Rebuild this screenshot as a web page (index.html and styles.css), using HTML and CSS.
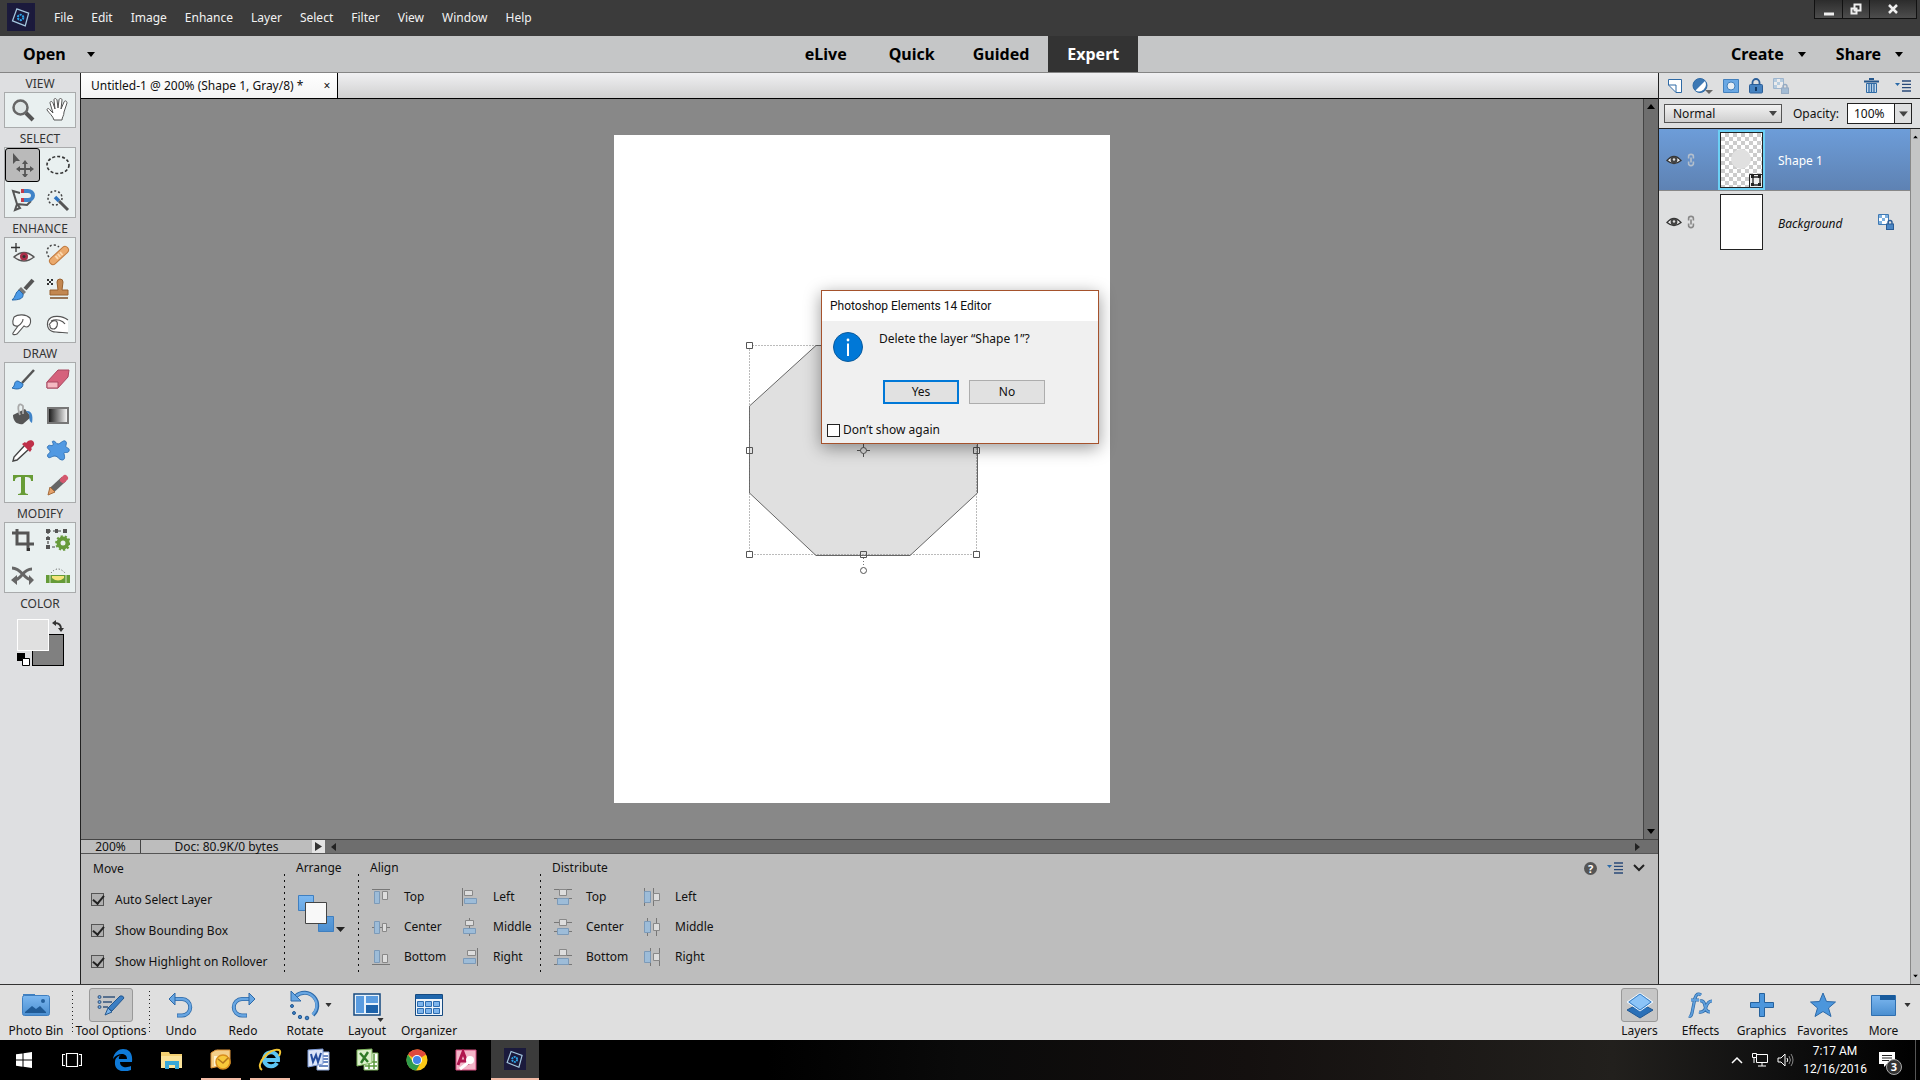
FILE: index.html
```html
<!DOCTYPE html>
<html lang="en">
<head>
  <meta charset="UTF-8">
  <meta name="viewport" content="width=device-width, initial-scale=1.0">
  <title>Photoshop Elements 14 Editor</title>
  <link rel="stylesheet" href="styles.css">
</head>
<body>
  <!-- shared shapes -->
  <svg class="defs" width="0" height="0" aria-hidden="true">
    <defs>
      <linearGradient id="blue" x1="0" y1="0" x2="0" y2="1"><stop offset="0" stop-color="#7db8f0"/><stop offset="1" stop-color="#4a8ed0"/></linearGradient>
      <linearGradient id="bw"><stop offset="0" stop-color="#111"/><stop offset="1" stop-color="#fff"/></linearGradient>
      <symbol id="down" viewBox="0 0 8 5"><path d="M0 0h8L4 5z"/></symbol>
      <symbol id="eye" viewBox="0 0 16 12"><path d="M1 6.500Q8-1.500 15 6.500Q8 12.500 1 6.500z" fill="#eee" stroke="#333" stroke-width="1.300"/><circle cx="8" cy="6" r="3.400" fill="#444"/><circle cx="8" cy="5.500" r="1.200" fill="#ddd"/></symbol>
      <symbol id="link" viewBox="0 0 10 16"><path d="M2 6V3.500a3 2.500 0 0 1 6 0V6M2 10v2.500a3 2.500 0 0 0 6 0V10M5 5v6" fill="none" stroke="currentColor" stroke-width="2"/></symbol>
      <symbol id="lines" viewBox="0 0 16 12"><path d="M0 3h5L2.500 6z" fill="#2a6aa8"/><path d="M7 1h9M7 4.300h9M7 7.600h9M7 11h9" stroke="#2a4a78" stroke-width="1.300"/></symbol>
      <symbol id="lockpix" viewBox="0 0 16 16"><path d="M.5.5h10v10H.5z" fill="#fff" stroke="#3f79b3"/><path d="M1 1h3v3H1zM7 1h3v3H7zM4 4h3v3H4zM1 7h3v3H1z" fill="#7db0df"/><path d="M10 10V8.500a2 2 0 0 1 4 0V10" fill="none" stroke="#2a5c96" stroke-width="1.400"/><rect x="8.500" y="10" width="7" height="5.500" fill="#4a86c4" stroke="#2a5c96"/></symbol>
      <symbol id="pse" viewBox="0 0 28 33"><rect width="28" height="33" fill="#1b1a3c"/><path d="M9 7l14 5-4 15-15-6z" fill="none" stroke="#a5c8e0" stroke-width="1.500"/><circle cx="13.500" cy="17" r="3.200" fill="none" stroke="#2ba3e8" stroke-width="2.400" stroke-dasharray="2.400 1"/></symbol>
    </defs>
  </svg>

  <header class="menu-bar">
    <svg class="logo" viewBox="0 0 28 33"><use href="#pse"/></svg>
    <nav class="menus">
      <button>File</button><button>Edit</button><button>Image</button><button>Enhance</button><button>Layer</button><button>Select</button><button>Filter</button><button>View</button><button>Window</button><button>Help</button>
    </nav>
    <div class="window-buttons">
      <button aria-label="Minimize"><svg width="12" height="14"><path d="M1 12h10" stroke="#eee" stroke-width="3"/></svg></button>
      <button aria-label="Restore"><svg width="14" height="14"><path d="M5.500 2.500h6v6h-6zM2.500 6.500h5v5h-5z" fill="#333" stroke="#eee" stroke-width="2"/></svg></button>
      <button aria-label="Close"><svg width="12" height="14"><path d="M2 3l8 8M10 3l-8 8" stroke="#eee" stroke-width="2.500"/></svg></button>
    </div>
  </header>

  <div class="mode-bar">
    <div class="mode-side"><button class="drop open">Open <svg width="8" height="5"><use href="#down"/></svg></button></div>
    <nav class="modes">
      <button class="wide">eLive</button><button>Quick</button><button>Guided</button><button class="active">Expert</button>
    </nav>
    <div class="mode-side right">
      <button class="drop">Create <svg width="8" height="5"><use href="#down"/></svg></button>
      <button class="drop">Share <svg width="8" height="5"><use href="#down"/></svg></button>
    </div>
  </div>

  <main class="workspace">
    <aside class="toolbox">
      <h2>VIEW</h2>
      <div class="tools">
        <button aria-label="Zoom"><svg viewBox="0 0 24 24"><circle cx="9.500" cy="9.500" r="7" fill="#dfe6e6" stroke="#666" stroke-width="2.500"/><path d="M15 15l7 7" stroke="#555" stroke-width="4"/></svg></button>
        <button aria-label="Hand"><svg viewBox="0 0 24 24"><path d="M8 22c-1-4-5-7-7-10 0-2 2-2 3 0l3 3L4 5c0-2 2-2 3 0l2 6L8 2c0-2 2-2 3 0l1 8 1-8c0-2 3-2 3 0l-1 9 3-7c1-2 3-1 3 1l-3 9c0 4-2 5-2 8z" fill="#fff" stroke="#555"/></svg></button>
      </div>
      <h2>SELECT</h2>
      <div class="tools">
        <button class="selected" aria-label="Move"><svg viewBox="0 0 24 24"><path d="M2 0v11l3-3h4z" fill="#555"/><path d="M14 9v14M7 16h14" stroke="#555" stroke-width="1.800"/><path d="M14 7l3 4h-6zM14 25l3-4h-6zM5 16l4-3v6zM23 16l-4-3v6z" fill="#555"/></svg></button>
        <button aria-label="Marquee"><svg viewBox="0 0 24 24"><ellipse cx="12" cy="12" rx="11" ry="8.500" fill="none" stroke="#333" stroke-width="1.600" stroke-dasharray="3 2"/></svg></button>
        <button aria-label="Lasso"><svg viewBox="0 0 24 24"><path d="M9 5L2 3l4 13 10 1 4-4M6 16l-2 6 5-2z" fill="none" stroke="#555" stroke-width="2"/><path d="M13 3h4a5 4.500 0 0 1 0 9h-4" fill="none" stroke="#3f83c8" stroke-width="4"/><path d="M10 3h3M10 12h3" stroke="#c23a4a" stroke-width="4"/></svg></button>
        <button aria-label="Quick selection"><svg viewBox="0 0 24 24"><circle cx="9" cy="10" r="7" fill="none" stroke="#444" stroke-width="1.500" stroke-dasharray="2 2"/><path d="M9 9l4 4" stroke="#2f74c0" stroke-width="3.500"/><path d="M13 13l9 9" stroke="#555" stroke-width="3"/></svg></button>
      </div>
      <h2>ENHANCE</h2>
      <div class="tools">
        <button aria-label="Red eye"><svg viewBox="0 0 24 24"><path d="M5 0v9M0 4.500h9" stroke="#333" stroke-width="1.300"/><path d="M3 14Q13 5 23 14Q13 22 3 14z" fill="#eee" stroke="#555" stroke-width="1.500"/><circle cx="13" cy="13.500" r="4" fill="#a82e48"/><circle cx="13" cy="13.500" r="1.500" fill="#333"/></svg></button>
        <button aria-label="Spot healing"><svg viewBox="0 0 24 24"><path d="M3 14a6 6 0 1 1 10-10" fill="none" stroke="#444" stroke-width="1.500" stroke-dasharray="2 2"/><path d="M7 18L19 7" stroke="#c07b40" stroke-width="8" stroke-linecap="round"/><path d="M7 18L19 7" stroke="#eaa96c" stroke-width="6" stroke-linecap="round"/><path d="M10 15l6-5" stroke="#fbd8ae" stroke-width="4" stroke-dasharray="2 1"/></svg></button>
        <button aria-label="Smart brush"><svg viewBox="0 0 24 24"><path d="M22 2l-8 9" stroke="#555" stroke-width="4"/><path d="M10 9l5 5-3 3-5-5z" fill="#777"/><path d="M8 12C4 14 5 19 1 22c6 0 12-1 11-6z" fill="#4a9ae8" stroke="#2a69a8"/></svg></button>
        <button aria-label="Clone stamp"><svg viewBox="0 0 24 24"><path d="M1 1h2v2H1zM5 1h2v2H5zM3 3h2v2H3zM1 5h2v2H1zM5 5h2v2H5z" fill="#333"/><path d="M11 4a3 3 0 0 1 6 0l-1 8h6v5H4v-5h8z" fill="#c38750" stroke="#98602e"/><path d="M4 20h18" stroke="#7c4e26" stroke-width="1.500"/></svg></button>
        <button aria-label="Smudge"><svg viewBox="0 0 24 24"><path d="M3 4c4-3 13-3 16 1 2 5 0 10-4 10l-3-1c-2 2-4 5-6 7-2 1-5 1-4-1l5-7c-4 2-6 0-5-3z" fill="#fff"/><path d="M3 4c-2 5-2 10 4 9l-5 7c-1 2 2 2 4 1l7-8c4 3 8-2 6-8M3 4c4-3 12-3 16 1M7 13c3-2 5-5 5-7" fill="none" stroke="#555" stroke-width="1.100"/></svg></button>
        <button aria-label="Sponge"><svg viewBox="0 0 24 24"><path d="M22 7C17 3 5 1 2 8c-2 7 2 11 8 11 6 1 7 0 12 1" fill="#fff" stroke="#555" stroke-width="1.200"/><path d="M5 8c6-3 12 0 14 3M3 12c4-7 10-5 8 1-2 5-8 3-7-1" fill="none" stroke="#555" stroke-width="1.200"/></svg></button>
      </div>
      <h2>DRAW</h2>
      <div class="tools">
        <button aria-label="Brush"><svg viewBox="0 0 24 24"><path d="M23 2L11 15" stroke="#555" stroke-width="2.500"/><path d="M7 13c-5 0-2 5-6 7 5 2 11 1 11-4z" fill="#4a9ae8" stroke="#2a69a8"/></svg></button>
        <button aria-label="Eraser"><svg viewBox="0 0 24 24"><path d="M12 2h11l-1 7-10 11H1v-6z" fill="#d5627c" stroke="#a84860"/><path d="M1 14h11v6H1z" fill="#f5b9c2" stroke="#a84860"/></svg></button>
        <button aria-label="Paint bucket"><svg viewBox="0 0 24 24"><path d="M2 12l12-6 6 8-8 7c-5 1-10-2-10-9z" fill="#555"/><path d="M9 12C5 2 9-1 12 3v8" fill="none" stroke="#aaa" stroke-width="1.800"/><path d="M15 8c7-1 7 7 6 12-4-2-2-7-3-9z" fill="#3f83c8"/></svg></button>
        <button aria-label="Gradient"><svg viewBox="0 0 24 24"><path d="M2 5h20v15H2z" fill="url(#bw)" stroke="#777" stroke-width="2"/></svg></button>
        <button aria-label="Eyedropper"><svg viewBox="0 0 24 24"><path d="M14 7l4 4L6 22l-4 1 1-4z" fill="#fff" stroke="#444" stroke-width="1.400"/><path d="M11 6l8 8 2-3-1-1 3-3c1-4-3-6-6-4l-2 2-1-1z" fill="#bf3049"/></svg></button>
        <button aria-label="Custom shape"><svg viewBox="0 0 24 24"><path d="M7 3c3 0 3 3 5 3s5-4 7-3c3 1 0 5 1 6s4 1 3 4-6 0-5 3 1 6-2 6-4-4-7-4-6 3-7 1c-2-3 3-4 2-6S0 10 2 8s4 1 5-1-2-3 0-4z" fill="#5199e2" stroke="#3575b8"/></svg></button>
        <button aria-label="Type"><svg viewBox="0 0 24 24"><path d="M2 2h20v6h-2c0-3-1-4-6-4v15c0 1 1 2 3 2v1H7v-1c2 0 3-1 3-2V4C5 4 4 5 4 8H2z" fill="#689c36"/></svg></button>
        <button aria-label="Pencil"><svg viewBox="0 0 24 24"><path d="M6 17L18 6" stroke="#666" stroke-width="6"/><path d="M17 7l2-2" stroke="#d4586e" stroke-width="6" stroke-linecap="round"/><path d="M4 14l5 5-7 3z" fill="#e5a26c" stroke="#a46a3a"/></svg></button>
      </div>
      <h2>MODIFY</h2>
      <div class="tools">
        <button aria-label="Crop"><svg viewBox="0 0 24 24"><path d="M1 5h16v18M6 1v15h17" fill="none" stroke="#555" stroke-width="3"/><path d="M16 20h3v3h-3z" fill="#333"/></svg></button>
        <button aria-label="Recompose"><svg viewBox="0 0 24 24"><path d="M2 3h17M2 3v16h8" fill="none" stroke="#444" stroke-width="1.200" stroke-dasharray="3 2"/><path d="M0 1h4v4H0zM9 1h3v4H9zM17 1h4v4h-4zM0 9h4v3H0zM0 17h4v4H0z" fill="#555"/><circle cx="17" cy="15" r="4.500" fill="none" stroke="#679b3b" stroke-width="4"/><circle cx="17" cy="15" r="6.800" fill="none" stroke="#679b3b" stroke-width="2" stroke-dasharray="2.200 2"/></svg></button>
        <button aria-label="Content-aware move"><svg viewBox="0 0 24 24"><path d="M1 5c10 0 12 12 20 12M21 6C11 6 11 17 3 17" fill="none" stroke="#666" stroke-width="3"/><path d="M0 17l6-5v10zM23 17l-5-5v10z" fill="#666"/></svg></button>
        <button aria-label="Straighten"><svg viewBox="0 0 24 24"><path d="M0 12h24v8H0z" fill="#659b38"/><path d="M4 12v8M20 12v8" stroke="#d7e8c8"/><path d="M6 13h12v2q-6 5-12 0z" fill="#f4e47a"/><path d="M5 10q7-8 14 0" fill="none" stroke="#444" stroke-dasharray="1 2"/></svg></button>
      </div>
      <h2>COLOR</h2>
      <div class="swatches">
        <button class="swatch back" aria-label="Background color"></button>
        <button class="swatch front" aria-label="Foreground color"></button>
        <svg class="swap" viewBox="0 0 12 12"><path d="M3 3q6 0 6 6" fill="none" stroke="#333" stroke-width="1.800"/><path d="M0 3l4-3v6zM9 12l3-4H6z" fill="#333"/></svg>
        <svg class="reset" viewBox="0 0 13 13"><path d="M0 0h8v8H0z"/><path d="M5.500 5.500h7v7h-7z" fill="#fff" stroke="#000"/></svg>
      </div>
    </aside>

    <section class="editor">
      <div class="tabs"><div class="tab">Untitled-1 @ 200% (Shape 1, Gray/8) *<button aria-label="Close tab">×</button></div></div>
      <div class="canvas-row">
        <div class="canvas">
          <div class="page">
            <svg width="496" height="668" viewBox="614 135 496 668">
              <path d="M749.500 406L816 345.500h94L977.500 406v87L910 555.500h-94L749.500 493z" fill="#e0e0e0" stroke="#666"/>
              <path d="M749.500 345.500h227v209h-227zM863.500 555v12" fill="none" stroke="#777" stroke-dasharray="1 2"/>
              <g fill="#fff" stroke="#555">
                <path d="M746.500 342.500h6v6h-6zM746.500 551.500h6v6h-6zM973.500 551.500h6v6h-6z"/>
                <path d="M746.500 447.500h6v6h-6zM973.500 447.500h6v6h-6zM860.500 551.500h6v6h-6z" fill="none"/>
                <circle cx="863.500" cy="570.500" r="3"/>
                <path d="M857 450.500h13M863.500 444v13"/><circle cx="863.500" cy="450.500" r="3" fill="#e0e0e0"/>
              </g>
            </svg>
          </div>
        </div>
        <div class="v-scroll"><svg width="8" height="5" class="flip"><use href="#down"/></svg><svg width="8" height="5"><use href="#down"/></svg></div>
      </div>
      <div class="status">
        <span class="zoom">200%</span><span class="doc">Doc: 80.9K/0 bytes</span>
        <button aria-label="Document info"><svg width="7" height="9"><path d="M0 0v9l7-4.500z" fill="#333"/></svg></button>
        <div class="h-scroll"><svg width="5" height="8"><path d="M5 0v8L0 4z" fill="#222"/></svg><svg width="5" height="8"><path d="M0 0v8l5-4z" fill="#222"/></svg></div>
      </div>
      <div class="options">
        <div class="move">
          <h3>Move</h3>
          <label><input type="checkbox" checked>Auto Select Layer</label>
          <label><input type="checkbox" checked>Show Bounding Box</label>
          <label><input type="checkbox" checked>Show Highlight on Rollover</label>
        </div>
        <div class="rule"></div>
        <div class="arrange">
          <h3>Arrange</h3>
          <button aria-label="Arrange layers"><svg width="50" height="40"><path d="M2.500 1.500h15v15h-15zM22.500 22.500h15v15h-15z" fill="url(#blue)" stroke="#3f7fc0"/><path d="M9.500 8.500h21v21h-21z" fill="#f8f8f8" stroke="#444"/><path d="M40 33h9l-4.500 5z" fill="#222"/></svg></button>
        </div>
        <div class="rule"></div>
        <div class="align">
          <h3>Align</h3>
          <div class="align-grid">
            <button><svg viewBox="0 0 18 18"><path class="ln" d="M0 1.500h18"/><path class="b" d="M2.500 3.500h5v12h-5z"/><path class="w" d="M10.500 3.500h5v8h-5z"/></svg>Top</button>
            <button><svg viewBox="0 0 18 18"><path class="ln" d="M1.500 0v18"/><path class="w" d="M3.500 2.500h8v5h-8z"/><path class="b" d="M3.500 10.500h12v5h-12z"/></svg>Left</button>
            <button><svg viewBox="0 0 18 18"><path class="ln" d="M0 9.500h18"/><path class="b" d="M2.500 3.500h5v12h-5z"/><path class="w" d="M10.500 5.500h4v8h-4z"/></svg>Center</button>
            <button><svg viewBox="0 0 18 18"><path class="ln" d="M8.500 0v18"/><path class="w" d="M4.500 2.500h8v5h-8z"/><path class="b" d="M2.500 10.500h12v5h-12z"/></svg>Middle</button>
            <button><svg viewBox="0 0 18 18"><path class="ln" d="M0 16.500h18"/><path class="b" d="M2.500 2.500h5v12h-5z"/><path class="w" d="M10.500 6.500h5v8h-5z"/></svg>Bottom</button>
            <button><svg viewBox="0 0 18 18"><path class="ln" d="M16.500 0v18"/><path class="w" d="M6.500 2.500h8v5h-8z"/><path class="b" d="M2.500 10.500h12v5h-12z"/></svg>Right</button>
          </div>
        </div>
        <div class="rule"></div>
        <div class="align">
          <h3>Distribute</h3>
          <div class="align-grid">
            <button><svg viewBox="0 0 18 18"><path class="ln" d="M0 1.500h18M0 10.500h18"/><path class="w" d="M5.500 1.500h7v6h-7z"/><path class="b" d="M3.500 10.500h11v6h-11z"/></svg>Top</button>
            <button><svg viewBox="0 0 18 18"><path class="ln" d="M1.500 0v18M10.500 0v18"/><path class="b" d="M1.500 3.500h6v11h-6z"/><path class="w" d="M10.500 5.500h6v7h-6z"/></svg>Left</button>
            <button><svg viewBox="0 0 18 18"><path class="ln" d="M0 4.500h18M0 13.500h18"/><path class="w" d="M5.500 1.500h7v6h-7z"/><path class="b" d="M3.500 10.500h11v6h-11z"/></svg>Center</button>
            <button><svg viewBox="0 0 18 18"><path class="ln" d="M4.500 0v18M13.500 0v18"/><path class="b" d="M1.500 3.500h6v11h-6z"/><path class="w" d="M10.500 5.500h6v7h-6z"/></svg>Middle</button>
            <button><svg viewBox="0 0 18 18"><path class="ln" d="M0 7.500h18M0 16.500h18"/><path class="w" d="M5.500 1.500h7v6h-7z"/><path class="b" d="M3.500 10.500h11v6h-11z"/></svg>Bottom</button>
            <button><svg viewBox="0 0 18 18"><path class="ln" d="M7.500 0v18M16.500 0v18"/><path class="b" d="M1.500 3.500h6v11h-6z"/><path class="w" d="M10.500 5.500h6v7h-6z"/></svg>Right</button>
          </div>
        </div>
        <div class="option-actions">
          <button class="help" aria-label="Help">?</button>
          <button aria-label="Options menu"><svg width="16" height="12"><use href="#lines"/></svg></button>
          <button aria-label="Collapse"><svg width="12" height="8"><path d="M1 1l5 5 5-5" fill="none" stroke="#222" stroke-width="2"/></svg></button>
        </div>
      </div>
    </section>

    <aside class="layers">
      <div class="layer-tools">
        <button aria-label="New layer"><svg width="14" height="14"><path d="M.5.5h13v13H8L.5 6z" fill="#fff" stroke="#2f6aa5"/><path d="M.5 6H8v7.500" fill="none" stroke="#2f6aa5"/></svg></button>
        <button aria-label="Adjustment layer"><svg width="21" height="16"><circle cx="8" cy="7.500" r="7" fill="#3d78b4" stroke="#2f6aa5"/><path d="M13 3a7 7 0 0 1-9.500 9.500z" fill="#fff"/><path d="M13 12h8l-4 4z" fill="#666"/></svg></button>
        <button aria-label="Layer mask"><svg width="16" height="14"><path d="M.5.5h15v13H.5z" fill="#6aa8e4" stroke="#4380bc"/><circle cx="8" cy="7" r="4" fill="#e8eef4" stroke="#4380bc"/></svg></button>
        <button aria-label="Lock layer"><svg width="14" height="16"><path d="M3.500 7V4.500a3.500 3.500 0 0 1 7 0V7" fill="none" stroke="#2c5f98" stroke-width="1.800"/><rect x=".5" y="6.500" width="13" height="8.500" rx="1" fill="#4582c0" stroke="#2c5f98"/><path d="M7 9v4" stroke="#153b66" stroke-width="2"/></svg></button>
        <button class="faded" aria-label="Lock transparent pixels"><svg width="16" height="16"><use href="#lockpix"/></svg></button>
        <button class="trash" aria-label="Delete layer"><svg width="15" height="16"><path d="M0 3.500h15M5 1h5" stroke="#25578c" stroke-width="2"/><path d="M2.500 5.500h10v9h-10z" fill="#c8ddf0" stroke="#2f6aa5"/><path d="M5 6v8M7.500 6v8M10 6v8" stroke="#2f6aa5" stroke-width="1.300"/></svg></button>
        <button aria-label="Panel menu"><svg width="16" height="12"><use href="#lines"/></svg></button>
      </div>
      <div class="blend-row">
        <div class="select-wrap"><select aria-label="Blend mode"><option>Normal</option></select><svg width="8" height="5"><use href="#down"/></svg></div>
        <label for="opacity">Opacity:</label>
        <div class="opacity"><input id="opacity" type="text" value="100%"><button aria-label="Opacity slider"><svg width="9" height="6" viewBox="0 0 8 5"><use href="#down"/></svg></button></div>
      </div>
      <div class="layer-body">
        <div class="layer-list">
          <div class="layer active">
            <svg width="16" height="12"><use href="#eye"/></svg><svg class="chain" width="8" height="14"><use href="#link"/></svg>
            <div class="thumb checker"><svg width="41" height="54"><circle cx="20" cy="26" r="10" fill="#e0e0e0"/><path d="M28.500 41.500h13v13h-13z" fill="#eee" stroke="#222"/><path d="M32 44h7v8h-7z" fill="none" stroke="#222" stroke-width="1.300"/><path d="M30 42h3v3h-3zM37 42h3v3h-3zM30 50h3v3h-3zM37 50h3v3h-3z" fill="#222"/></svg></div>
            <span class="name">Shape 1</span>
          </div>
          <div class="layer">
            <svg width="16" height="12"><use href="#eye"/></svg><svg class="chain" width="8" height="14"><use href="#link"/></svg>
            <div class="thumb"></div>
            <span class="name"><i>Background</i></span>
            <svg width="16" height="16"><use href="#lockpix"/></svg>
          </div>
        </div>
        <div class="layer-scroll"><svg width="5" height="4" class="flip" viewBox="0 0 8 5"><use href="#down"/></svg><svg width="5" height="4" viewBox="0 0 8 5"><use href="#down"/></svg></div>
      </div>
    </aside>
  </main>

  <footer class="action-bar">
    <div class="action-group">
      <button class="action bin"><span class="pic"><svg width="28" height="26"><path d="M1 2h12v3H1z" fill="#3f7fc0"/><rect x=".5" y="3.500" width="27" height="20" rx="2" fill="url(#blue)" stroke="#3f7fc0"/><circle cx="21" cy="9" r="2" fill="#235f9c"/><path d="M3 20l7-6 4 3 4-3 6 6v1H3z" fill="#1f5a96"/></svg></span>Photo Bin</button>
      <div class="dots"></div>
      <button class="action opts"><span class="pic pressed"><svg width="28" height="24"><path d="M6 4h12M6 9h9M6 14h5" stroke="#35547c" stroke-width="1.600"/><g fill="#6aa8e4" stroke="#35547c"><circle cx="2.500" cy="4" r="1.500"/><circle cx="2.500" cy="9" r="1.500"/><circle cx="2.500" cy="14" r="1.500"/></g><path d="M11 15L23 3q3-1 4 2L15 18z" fill="#3c7fc4" stroke="#25588e"/><path d="M11 15l4 4-7 3z" fill="#79b4ec" stroke="#25588e"/></svg></span>Tool Options</button>
      <div class="dots"></div>
      <button class="action"><span class="pic"><svg width="26" height="26"><path d="M6 7h8a7.500 7.500 0 0 1 0 16.500H9" fill="none" stroke="#2c69a8" stroke-width="4"/><path d="M6 7h8a7.500 7.500 0 0 1 0 16.500H9.500" fill="none" stroke="#68a6e2" stroke-width="2.400"/><path d="M1 7l6-6v12z" fill="#68a6e2" stroke="#2c69a8"/></svg></span>Undo</button>
      <button class="action"><span class="pic"><svg width="26" height="26"><path d="M20 7h-8a7.500 7.500 0 0 0 0 16.500h5" fill="none" stroke="#2c69a8" stroke-width="4"/><path d="M20 7h-8a7.500 7.500 0 0 0 0 16.500h4.500" fill="none" stroke="#68a6e2" stroke-width="2.400"/><path d="M25 7l-6-6v12z" fill="#68a6e2" stroke="#2c69a8"/></svg></span>Redo</button>
      <button class="action"><span class="pic"><svg width="32" height="32"><path d="M7 7a12 12 0 1 1 17 19" fill="none" stroke="#2c69a8" stroke-width="4"/><path d="M7 7a12 12 0 1 1 16.500 18.500" fill="none" stroke="#68a6e2" stroke-width="2.400"/><path d="M2 2v10h10z" fill="#68a6e2" stroke="#2c69a8"/><g fill="#3d80c6" stroke="#245a92"><circle cx="3" cy="17" r="1.500"/><circle cx="5" cy="24" r="1.500"/><circle cx="11" cy="28" r="1.700"/><circle cx="18" cy="29" r="1.800"/></g></svg><svg class="caret" width="7" height="4" viewBox="0 0 8 5"><use href="#down"/></svg></span>Rotate</button>
      <button class="action"><span class="pic"><svg width="28" height="24"><path d="M1 1h26v21H1z" fill="#e8f2fa" stroke="#164a80" stroke-width="1.500"/><path d="M3 3h8v17H3zM13 3h12v7H13z" fill="#5a9ce0"/><path d="M13 12h12v8H13z" fill="#1c62aa"/></svg><svg class="caret low" width="7" height="4" viewBox="0 0 8 5"><use href="#down"/></svg></span>Layout</button>
      <button class="action"><span class="pic"><svg width="28" height="24"><path d="M.5 1.500h27v21H.5z" fill="#eef4fa" stroke="#164a80"/><path d="M1 2h26v4H1z" fill="#1f66ac"/><path d="M2.500 8.500h6v5h-6zM10.500 8.500h6v5h-6zM18.500 8.500h6v5h-6zM2.500 15.500h6v5h-6zM10.500 15.500h6v5h-6zM18.500 15.500h6v5h-6z" fill="#7db4ec" stroke="#2c6cb0"/></svg></span>Organizer</button>
    </div>
    <div class="action-group panels">
      <button class="action"><span class="pic pressed small"><svg width="28" height="28"><path d="M14 12l13 7-13 8-13-8z" fill="#2a70b8" stroke="#1f5894"/><path d="M14 2l13 9-13 9L1 11z" fill="#8cc4f8" stroke="#f4f8fc"/><path d="M14 3l11 8-11 8L3 11z" fill="#8cc4f8" stroke="#3a7fc4"/></svg></span>Layers</button>
      <button class="action"><span class="pic"><svg width="26" height="28"><path d="M13 4q-4-3-6 3L4 22q-1 4-3 3M3 9h8M12 10q4-1 5 5t5 6M24 10q-4 0-6 6t-7 5" fill="none" stroke="#2c69a8" stroke-width="3.200"/><path d="M13 4q-4-3-6 3L4 22q-1 4-3 3M3 9h8M12 10q4-1 5 5t5 6M24 10q-4 0-6 6t-7 5" fill="none" stroke="#5f9fdc" stroke-width="1.800"/></svg></span>Effects</button>
      <button class="action"><span class="pic"><svg width="24" height="24"><path d="M9.500.5h5v9h9v5h-9v9h-5v-9h-9v-5h9z" fill="#4c96dc" stroke="#25619c"/></svg></span>Graphics</button>
      <button class="action"><span class="pic"><svg width="26" height="26"><path d="M13 1l3.500 8.500 9 .5-7 6 2.500 8.500-8-5-8 5L7.500 16l-7-6 9-.5z" fill="#4c96dc" stroke="#2c69a8"/></svg></span>Favorites</button>
      <button class="action"><span class="pic"><svg width="25" height="22"><path d="M.5 1.500h24v20H.5z" fill="url(#blue)" stroke="#2f6fb0"/><path d="M9 1h15v5H9z" fill="#175a9c"/></svg><svg class="caret" width="7" height="4" viewBox="0 0 8 5"><use href="#down"/></svg></span>More</button>
    </div>
  </footer>

  <div class="taskbar">
    <button aria-label="Start"><svg width="16" height="16"><path d="M0 2.300L6.500 1.400v6.200H0zM7.500 1.200L16 0v7.600H7.500zM0 8.500h6.500v6.200L0 13.800zM7.500 8.500H16V16l-8.500-1.200z" fill="#fff"/></svg></button>
    <button aria-label="Task view"><svg width="20" height="16"><path d="M4.500 1.500h11v13h-11zM3 2.500H.5v11H3M17 2.500h2.500v11H17" fill="none" stroke="#fff" stroke-width="1.200"/></svg></button>
    <div class="pinned">
      <button aria-label="Edge"><svg width="22" height="22"><path d="M1 10C2 3 7 0 11 0c6 0 10 4 9 13H8c0 6 7 6 11 4v4C12 24 2 22 3 13c0-4 3-6 6-7-3 2-2 3-2 4h8c0-7-10-6-14 0z" fill="#0f7ad8"/></svg></button>
      <button aria-label="File Explorer"><svg width="22" height="20"><path d="M0 2h8l1 2h12v14H0z" fill="#f3d072"/><path d="M0 6h21v12H0z" fill="#fbe39a"/><path d="M4 11h14v8h-4v-4H8v4H4z" fill="#39a8d8"/></svg></button>
      <button class="running" aria-label="Outlook"><svg width="24" height="24"><path d="M2 5q5-4 8-3h11v14l-19 4z" fill="#f4cf8a" stroke="#e09438"/><path d="M5 8h15v10H5z" fill="#fff3d0"/><circle cx="14" cy="14" r="7" fill="#f8c83a" stroke="#d98e1e" stroke-width="1.500"/><path d="M9 11l5 4 5-5" fill="none" stroke="#b4761a" stroke-width="1.500"/></svg></button>
      <button class="running" aria-label="Internet Explorer"><svg width="24" height="24"><path d="M19 15a7 7 0 1 1 1-3H8" fill="none" stroke="#5cc5f2" stroke-width="4"/><path d="M4 22C-4 17 12-1 21 2c2 1 1 4 0 6" fill="none" stroke="#f2c534" stroke-width="2"/></svg></button>
      <button aria-label="Word"><svg width="24" height="24"><path d="M10 4h12v18H10z" fill="#fff" stroke="#8ba5d8"/><path d="M16 8h5M16 11h5M16 14h5M12 18h9" stroke="#3c64b0" stroke-width="1.500"/><path d="M1 2l15-1v15L1 19z" fill="#dbe5f8" stroke="#7d9ad6"/><path d="M4 6l2 8 3-7 2 7 3-9" fill="none" stroke="#244c9c" stroke-width="2"/></svg></button>
      <button aria-label="Excel"><svg width="24" height="24"><path d="M8 5h14v17H8z" fill="#fff" stroke="#74aa54"/><path d="M9 14h12M9 18h12M13 6v15M18 6v15" stroke="#5a9a3c" stroke-width="1.500"/><path d="M1 2l15-1v14L1 18z" fill="#dcf0cc" stroke="#7db45c"/><path d="M4 5l8 9M12 4L5 15" stroke="#2f7a28" stroke-width="2.400"/></svg></button>
      <button aria-label="Chrome"><svg width="22" height="22"><circle cx="11" cy="11" r="10.500" fill="#fbc916"/><path d="M11 11L2 5.500A10.500 10.500 0 0 1 20 5.500z" fill="#e04a3c"/><path d="M11 .5A10.500 10.500 0 0 1 20.200 6H11z" fill="#e04a3c"/><path d="M2 5.500a10.500 10.500 0 0 0 8 16L15 13 7 13z" fill="#2f9c4c"/><circle cx="11" cy="11" r="5" fill="#fff"/><circle cx="11" cy="11" r="4" fill="#4285e8"/></svg></button>
      <button aria-label="Access"><svg width="22" height="22"><path d="M1 1h20v20H1z" fill="#f3b5c8" stroke="#d44a7e"/><path d="M3 16L8 3l5 13M5 12h6" fill="none" stroke="#b0154e" stroke-width="3"/><circle cx="15" cy="11" r="4" fill="#fff"/><path d="M5 20l9-7" stroke="#fff" stroke-width="3"/></svg></button>
      <button class="current" aria-label="Photoshop Elements"><svg width="22" height="22" viewBox="0 5 28 23"><rect x="-2" width="32" height="33" fill="#191a3a"/><use href="#pse" width="28" height="33"/></svg></button>
    </div>
    <div class="tray">
      <svg width="12" height="8"><path d="M1 7l5-5 5 5" fill="none" stroke="#fff" stroke-width="1.500"/></svg>
      <svg width="16" height="14"><path d="M4.500 1.500h11v8h-11zM10 10v3M6 13h8M2 5v5" fill="none" stroke="#fff"/><path d="M.5.500h4v4h-4z" fill="#111" stroke="#fff"/></svg>
      <svg width="17" height="14"><path d="M1 5h3l4-4v12L4 9H1z" fill="none" stroke="#fff"/><path d="M10 5q1.500 2 0 4" fill="none" stroke="#fff"/><path d="M12 3q3 4 0 8M14 1q4 6 0 12" fill="none" stroke="#888"/></svg>
      <div class="clock"><span>7:17 AM</span><span>12/16/2016</span></div>
      <button class="notes" aria-label="Notifications"><svg width="16" height="16"><path d="M0 0h16v12H8l-3 3v-3H0z" fill="#fff"/><path d="M3 3.500h10M3 6h10M3 8.500h7" stroke="#222"/></svg><span class="badge">3</span></button>
    </div>
  </div>

  <div class="dialog" role="dialog" aria-labelledby="dialog-title">
    <div class="dialog-title" id="dialog-title">Photoshop Elements 14 Editor</div>
    <div class="dialog-body">
      <div class="message">
        <svg width="30" height="30"><circle cx="15" cy="15" r="14.500" fill="#0078d7" stroke="#0a5a9c"/><path d="M15 11.500V24" stroke="#fff" stroke-width="2"/><circle cx="15" cy="8" r="1.400" fill="#fff"/></svg>
        <p>Delete the layer “Shape 1”?</p>
      </div>
      <div class="dialog-buttons"><button class="primary">Yes</button><button>No</button></div>
      <label class="again"><input type="checkbox">Don’t show again</label>
    </div>
  </div>
</body>
</html>
```
FILE: styles.css
```css
* {
  box-sizing: border-box;
}

body {
  margin: 0;
  min-height: 100vh;
  display: flex;
  flex-direction: column;
  font-family: "Noto Sans", "Open Sans", sans-serif;
  font-size: 12px;
  line-height: 16px;
  color: #111;
  background-color: #dedfe0;
}

.defs {
  position: absolute;
}

svg {
  display: block;
  flex: none;
}

button {
  font: inherit;
  color: inherit;
  background: none;
  border: none;
  padding: 0;
  cursor: pointer;
}

h2, h3, p {
  margin: 0;
  font-size: 12px;
  font-weight: normal;
}

.flip {
  transform: rotate(180deg);
}

/* top bars */
.menu-bar {
  height: 36px;
  display: flex;
  background-color: #3b3b3b;
  color: #f2f2f2;
}

.logo {
  width: 28px;
  height: 28px;
  margin: 3px 0 0 7px;
  background-color: #1b1a3c;
}

.menus {
  display: flex;
  align-items: center;
  gap: 18px;
  margin-left: 19px;
}

.window-buttons {
  display: flex;
  height: 19px;
  margin: 0 3px 0 auto;
  border: 1px solid #111;
  border-top: none;
}

.window-buttons button {
  width: 27px;
  display: flex;
  align-items: center;
  justify-content: center;
  background: linear-gradient(#2c2c2c, #4d4d4d);
}

.window-buttons button + button {
  border-left: 1px solid #111;
}

.window-buttons button:last-child {
  width: 47px;
}

.mode-bar {
  height: 37px;
  display: flex;
  background-color: #c5c6c7;
  border-bottom: 1px solid #858585;
  font-size: 16px;
  font-weight: bold;
  color: #000;
}

.mode-side {
  flex: 1;
  display: flex;
  padding: 0 17px 0 23px;
}

.mode-side.right {
  justify-content: flex-end;
  gap: 30px;
}

.modes {
  display: flex;
  margin-left: 4px;
}

.modes button {
  padding: 0 19px;
}

.modes .wide {
  margin-right: 4px;
}

.modes .active {
  background-color: #333;
  color: #fff;
}

.drop {
  display: flex;
  align-items: center;
  gap: 14px;
}

.drop.open {
  gap: 21px;
}

/* workspace */
.workspace {
  flex: 1;
  display: flex;
}

.toolbox {
  width: 81px;
  padding: 0 4px;
  background-color: #dedfe1;
  border-right: 1px solid #222;
}

.toolbox h2 {
  height: 19px;
  line-height: 22px;
  text-align: center;
  color: #333;
}

.tools {
  width: 72px;
  display: grid;
  grid-template-columns: 35px 35px;
  grid-auto-rows: 34px;
  row-gap: 1px;
  background-color: #e9f0f0;
  border: 1px solid #a9abac;
}

.tools button {
  display: flex;
  align-items: center;
  justify-content: center;
}

.tools svg {
  width: 24px;
  height: 24px;
}

.tools .selected {
  background-color: #bababa;
  border: 1px solid #000;
  border-radius: 3px;
}

.swatches {
  position: relative;
  width: 47px;
  height: 47px;
  margin: 7px 13px;
}

.swatch {
  position: absolute;
  width: 32px;
  height: 32px;
}

.front {
  left: 0;
  top: 0;
  background-color: #e0e0e0;
  border: 1px solid #fff;
}

.back {
  right: 0;
  bottom: 0;
  background-color: #808080;
  border: 1px solid #000;
}

.swap {
  position: absolute;
  width: 12px;
  height: 12px;
  right: 0;
  top: 1px;
}

.reset {
  position: absolute;
  width: 13px;
  height: 13px;
  left: 0;
  bottom: 0;
}

.editor {
  flex: 1;
  min-width: 0;
  display: flex;
  flex-direction: column;
}

.tabs {
  height: 26px;
  display: flex;
  background: linear-gradient(#f0f0f2, #d0d0d0);
  border-bottom: 1px solid #000;
}

.tab {
  display: flex;
  align-items: center;
  gap: 20px;
  padding: 0 7px 0 10px;
  background: linear-gradient(#fff, #f4f4f4);
  border-right: 1px solid #000;
}

.canvas-row {
  flex: 1;
  display: flex;
}

.canvas {
  flex: 1;
  display: flex;
  align-items: center;
  justify-content: center;
  background-color: #888;
}

.page {
  background-color: #fff;
}

.v-scroll {
  width: 15px;
  display: flex;
  flex-direction: column;
  align-items: center;
  justify-content: space-between;
  padding: 5px 0;
  background-color: #6e6e6e;
  border-left: 1px solid #444;
}

.status {
  height: 15px;
  display: flex;
  line-height: 13px;
  background-color: #bdbdbd;
  border-top: 1px solid #444;
  border-bottom: 1px solid #555;
}

.zoom {
  width: 60px;
  text-align: center;
  border-right: 1px solid #444;
}

.doc {
  width: 171px;
  text-align: center;
}

.status button {
  width: 13px;
  display: flex;
  align-items: center;
  justify-content: center;
  background-color: #e4e4e4;
}

.h-scroll {
  flex: 1;
  display: flex;
  align-items: center;
  justify-content: space-between;
  padding: 0 18px 0 6px;
  background-color: #6e6e6e;
}

.options {
  height: 130px;
  display: flex;
  padding-top: 4px;
  background-color: #bdbdbd;
}

.options h3 {
  line-height: 20px;
}

.rule {
  width: 1px;
  height: 100px;
  margin-top: 16px;
  background: repeating-linear-gradient(#111 0 2px, transparent 2px 6px);
}

.move {
  width: 203px;
  padding-left: 10px;
}

.move h3 {
  padding: 1px 0 5px 2px;
}

.move label {
  display: flex;
  align-items: center;
  gap: 11px;
  height: 31px;
}

.move input {
  appearance: none;
  width: 13px;
  height: 13px;
  margin: 0;
  background-color: #b0b0b0;
  border: 1px solid #555;
  position: relative;
}

.move input:checked::after {
  content: "";
  position: absolute;
  left: 3px;
  top: -1px;
  width: 5px;
  height: 9px;
  border: solid #222;
  border-width: 0 2px 2px 0;
  transform: rotate(40deg);
}

.arrange {
  width: 73px;
  padding-left: 11px;
}

.arrange button {
  margin-top: 16px;
}

.align {
  width: 181px;
  padding-left: 11px;
}

.align-grid {
  display: grid;
  grid-template-columns: 89px 89px;
  grid-auto-rows: 30px;
  padding: 4px 0 0 2px;
}

.align-grid button {
  display: flex;
  align-items: center;
  gap: 14px;
}

.align-grid svg {
  width: 18px;
  height: 18px;
}

.ln {
  fill: none;
  stroke: #777;
}

.b {
  fill: #9dbcd8;
  stroke: #7c9ab8;
}

.w {
  fill: #ddd;
  stroke: #888;
}

.option-actions {
  height: 20px;
  display: flex;
  align-items: center;
  gap: 10px;
  margin: 0 13px 0 auto;
}

.help {
  width: 13px;
  height: 13px;
  border-radius: 50%;
  background-color: #555;
  color: #fff;
  font-size: 11px;
  font-weight: bold;
  line-height: 13px;
}

/* layers panel */
.layers {
  width: 262px;
  display: flex;
  flex-direction: column;
  border-left: 1px solid #222;
}

.layer-tools {
  height: 26px;
  display: flex;
  align-items: center;
  gap: 10px;
  padding: 0 9px;
  border-bottom: 1px solid #222;
}

.layer-tools .trash {
  margin: 0 6px 0 auto;
}

.faded {
  opacity: 0.4;
}

.blend-row {
  height: 30px;
  display: flex;
  align-items: center;
  padding: 0 8px 0 5px;
  border-bottom: 1px solid #222;
}

.select-wrap {
  position: relative;
  width: 118px;
  margin-right: 11px;
}

.select-wrap select {
  appearance: none;
  width: 100%;
  height: 19px;
  padding: 0 8px;
  font: inherit;
  color: inherit;
  background: linear-gradient(#f2f2f2, #cfcfcf);
  border: 1px solid #555;
  border-radius: 0;
}

.select-wrap svg {
  position: absolute;
  right: 5px;
  top: 7px;
  fill: #444;
}

.opacity {
  display: flex;
  width: 65px;
  height: 21px;
  margin-left: auto;
  border: 1px solid #222;
}

.opacity input {
  width: 46px;
  padding: 0 6px;
  font: inherit;
  color: inherit;
  background-color: #fff;
  border: none;
}

.opacity button {
  flex: 1;
  display: flex;
  align-items: center;
  justify-content: center;
  border-left: 1px solid #222;
  fill: #444;
}

.layer-body {
  flex: 1;
  display: flex;
}

.layer-list {
  flex: 1;
}

.layer {
  height: 62px;
  display: flex;
  align-items: center;
  padding: 0 16px 0 7px;
}

.layer.active {
  color: #fff;
  background: linear-gradient(#6d9dd9, #5e82b3);
  border-bottom: 1px solid #888;
}

.chain {
  margin: 0 25px 0 5px;
  color: #888;
}

.active .chain {
  color: #b4bfcc;
}

.thumb {
  width: 43px;
  height: 56px;
  background-color: #fff;
  border: 1px solid #222;
}

.active .thumb {
  box-shadow: 0 0 0 2px #6cd0f5;
}

.thumb.checker {
  background: repeating-conic-gradient(#ccc 0 25%, #fff 0 50%) 0 0 / 8px 8px;
}

.name {
  flex: 1;
  margin-left: 15px;
  padding-top: 3px;
}

.layer-scroll {
  width: 10px;
  display: flex;
  flex-direction: column;
  align-items: center;
  justify-content: space-between;
  padding: 6px 0;
  background-color: #c4c5c6;
  border-left: 1px solid #888;
}

/* bottom bar */
.action-bar {
  height: 56px;
  display: flex;
  justify-content: space-between;
  padding-right: 6px;
  background-color: #dfdfdf;
  border-top: 1px solid #333;
}

.action-group {
  display: flex;
}

.action {
  width: 62px;
  display: flex;
  flex-direction: column;
  align-items: center;
  padding-top: 3px;
  line-height: 18px;
  white-space: nowrap;
}

.panels .action {
  width: 61px;
}

.action.bin {
  width: 72px;
}

.action.opts {
  width: 76px;
}

.pic {
  position: relative;
  width: 44px;
  height: 36px;
  display: flex;
  align-items: center;
  justify-content: center;
}

.pic.small {
  width: 37px;
}

.pressed {
  background-color: #c6c6c6;
  border: 1px solid #999;
  border-radius: 3px;
}

.caret {
  position: absolute;
  left: 42px;
  top: 15px;
  fill: #333;
}

.caret.low {
  left: 32px;
  top: 30px;
}

.dots {
  width: 1px;
  height: 42px;
  margin-top: 6px;
  background: repeating-linear-gradient(#222 0 1px, transparent 1px 4px);
}

/* taskbar */
.taskbar {
  height: 40px;
  display: flex;
  background: linear-gradient(90deg, #000 40%, #0a0a0a 50%, #14100f 65%, #22201d 84%, #111 92%, #000);
  color: #fff;
}

.taskbar button {
  width: 48px;
  display: flex;
  align-items: center;
  justify-content: center;
}

.pinned {
  display: flex;
  gap: 1px;
  margin-left: 3px;
}

.taskbar .running {
  background: linear-gradient(#f2bba6, #f2bba6) center bottom / 40px 2px no-repeat;
}

.taskbar .current {
  background-color: #3b3b3b;
  border-bottom: 2px solid #f2bba6;
}

.tray {
  display: flex;
  align-items: center;
  gap: 9px;
  margin-left: auto;
  margin-right: 4px;
  border-right: 1px solid #555;
}

.clock {
  display: flex;
  flex-direction: column;
  align-items: center;
  font-family: Roboto, sans-serif;
  line-height: 18px;
}

.taskbar .notes {
  position: relative;
  width: 22px;
  height: 40px;
  margin-right: 17px;
}

.badge {
  position: absolute;
  left: 10px;
  top: 19px;
  width: 16px;
  height: 16px;
  border: 1px solid #aaa;
  border-radius: 50%;
  background-color: #333;
  font-size: 11px;
  font-weight: bold;
  line-height: 14px;
  text-align: center;
}

/* confirm dialog */
.dialog {
  position: absolute;
  left: 50%;
  top: 290px;
  width: 278px;
  transform: translateX(-50%);
  background-color: #f0f0f0;
  border: 1px solid #a5522c;
  box-shadow: 0 4px 16px rgba(0, 0, 0, 0.4);
}

.dialog-title {
  padding: 7px 8px;
  font-family: Roboto, sans-serif;
  background-color: #fff;
}

.dialog-body {
  padding: 11px 5px 5px;
}

.message {
  display: flex;
  gap: 16px;
  padding-left: 6px;
}

.message p {
  line-height: 14px;
}

.dialog-buttons {
  display: flex;
  gap: 10px;
  padding: 18px 0 0 56px;
}

.dialog-buttons button {
  width: 76px;
  height: 24px;
  background-color: #e1e1e1;
  border: 1px solid #adadad;
}

.dialog-buttons .primary {
  border: 2px solid #0078d7;
}

.again {
  display: flex;
  align-items: center;
  gap: 3px;
  margin-top: 18px;
}

.again input {
  appearance: none;
  width: 13px;
  height: 13px;
  margin: 0;
  background-color: #fff;
  border: 1px solid #222;
}
```
